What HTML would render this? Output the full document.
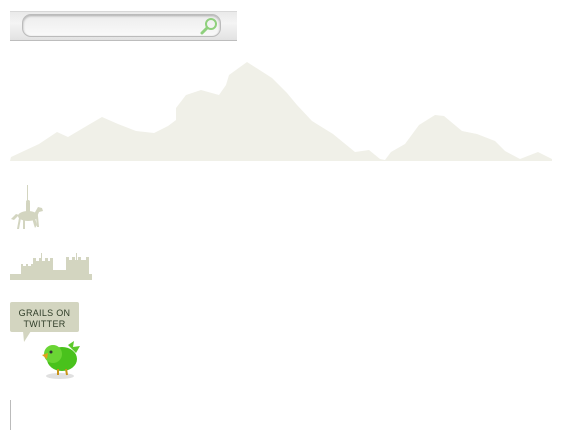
<!DOCTYPE html>
<html><head><meta charset="utf-8"><style>
html,body{margin:0;padding:0;background:#fff;width:562px;height:440px;overflow:hidden;font-family:"Liberation Sans",sans-serif;position:relative}
.bar{position:absolute;left:10px;top:11px;width:227px;height:30px;background:linear-gradient(#e9e9e9,#f4f4f4 40%,#e2e2e2);border-top:1px solid #d8d8d8;border-bottom:1px solid #bdbdbd;box-sizing:border-box}
.inp{position:absolute;left:22px;top:14px;width:199px;height:23px;border-radius:9px;background:linear-gradient(#ededed,#f9f9f9);border:1px solid #bbb;box-sizing:border-box;box-shadow:inset 0 1px 2px #aaa}
.bubble{position:absolute;left:10px;top:302px;width:69px;height:30px;background:#d3d5c0;border-radius:2px;text-align:center;font-size:9px;line-height:11px;color:#2f3d28;padding-top:6px;box-sizing:border-box;letter-spacing:.3px;font-weight:500}
</style></head><body>
<div class="bar"></div>
<div class="inp"></div>
<svg style="position:absolute;left:198px;top:15px" width="22" height="22" viewBox="0 0 22 22">
<circle cx="13" cy="9" r="5" fill="none" stroke="#8fd07d" stroke-width="2"/>
<line x1="9" y1="13" x2="4" y2="18" stroke="#8fd07d" stroke-width="3" stroke-linecap="round"/>
</svg>
<svg style="position:absolute;left:0;top:0" width="562" height="170">
<polygon fill="#f0f0e8" points="11,157 39,144 57,132 68,137 90,124 102,117 118,124 136,131 154,133 168,126 176,120 176,108 186,95 201,90 219,95 226,85 229,75 247,62 258,69 272,78 287,93 297,105 312,121 333,134 344,143 355,152 369,150 380,159 385,160 391,152 405,144 419,125 435,115 444,116 462,131 477,134 495,141 505,151 520,159 538,152 552,159 552,161 10,161"/>
</svg>
<svg style="position:absolute;left:8px;top:185px" width="40" height="48" viewBox="0 0 40 48">
<g fill="#d3d5c0">
<rect x="19" y="0" width="1" height="22"/>
<ellipse cx="20" cy="31" rx="10" ry="5"/>
<rect x="18" y="18" width="4" height="10"/>
<circle cx="20" cy="17" r="2"/>
<path d="M26 29 L30 22 L34 23 L35 26 L31 27 L29 32 Z"/>
<path d="M3 34 L8 29 L11 30 L6 35 Z"/>
<path d="M11 33 L13 33 L11 44 L9 44 Z"/><rect x="15" y="34" width="2" height="10"/>
<path d="M24 33 L27 33 L29 40 L27 43 L26 40 Z"/><path d="M28 32 L30 31 L31 42 L29 42 Z"/>
</g></svg>
<svg style="position:absolute;left:10px;top:250px" width="85" height="32" viewBox="0 0 85 32">
<g fill="#d3d5c0">
<rect x="0" y="24" width="82" height="6"/>
<rect x="11" y="16" width="12" height="11"/>
<rect x="23" y="11" width="20" height="16"/>
<rect x="41" y="20" width="16" height="7"/>
<rect x="56" y="10" width="23" height="17"/>
<rect x="23" y="8" width="3" height="3"/><rect x="29" y="8" width="3" height="3"/><rect x="35" y="8" width="3" height="3"/><rect x="40" y="8" width="3" height="3"/>
<rect x="56" y="7" width="3" height="3"/><rect x="62" y="7" width="3" height="3"/><rect x="68" y="7" width="3" height="3"/><rect x="76" y="7" width="3" height="3"/>
<rect x="11" y="14" width="2" height="2"/><rect x="16" y="14" width="2" height="2"/><rect x="21" y="14" width="2" height="2"/>
<rect x="31" y="3" width="1" height="8"/><rect x="66" y="3" width="1" height="7"/>
</g></svg>
<div class="bubble">GRAILS ON<br>TWITTER</div>
<svg style="position:absolute;left:22px;top:331px" width="10" height="12"><path d="M1 0 L9 0 L2 11 Z" fill="#d3d5c0"/></svg>
<svg style="position:absolute;left:38px;top:339px" width="44" height="42" viewBox="0 0 44 42">
<ellipse cx="22" cy="37" rx="14" ry="3" fill="#ccc" opacity=".6"/>
<path d="M30 6 L36 2 L35 8 L42 7 L38 14 Z" fill="#5cc92a"/>
<ellipse cx="24" cy="20" rx="15" ry="12" fill="#49c21c"/>
<ellipse cx="15" cy="15" rx="9" ry="9" fill="#6ad534"/>
<path d="M4 16 L10 14 L9 20 Z" fill="#e3a11f"/>
<circle cx="13" cy="13" r="1.5" fill="#333"/>
<path d="M20 30 L20 36 M28 30 L29 36" stroke="#c9941a" stroke-width="2"/>
</svg>
<div style="position:absolute;left:10px;top:400px;width:1px;height:30px;background:#bbb"></div>
</body></html>
